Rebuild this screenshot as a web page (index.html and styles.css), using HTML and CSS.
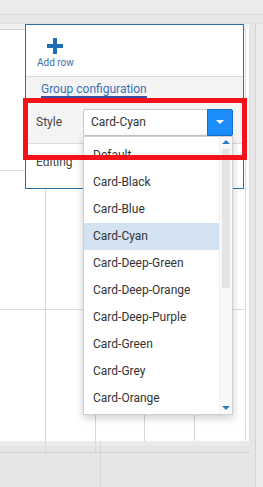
FILE: index.html
```html
<!DOCTYPE html>
<html lang="en">
<head>
    <meta charset="UTF-8">
    <meta name="viewport" content="width=device-width, initial-scale=1.0">
    <title>Group configuration</title>
    <link rel="stylesheet" href="styles.css">
</head>
<body>
    <div class="screen">
        <div class="topbar"></div>
        <div class="subbar"></div>

        <div class="workspace">
            <div class="board">
                <div class="board-top">
                    <div class="sheet">
                        <div class="sheet-row row-a"></div>
                        <div class="sheet-row row-b">
                            <div class="cell c1"></div>
                        </div>
                        <div class="sheet-row row-c">
                            <div class="cell c1"></div>
                            <div class="cell c2"></div>
                            <div class="cell c3"></div>
                            <div class="cell c4"></div>
                        </div>
                    </div>
                    <div class="sheet-edge"></div>
                </div>
                <div class="footer-strip">
                    <div class="cell c1"></div>
                    <div class="cell c2"></div>
                    <div class="cell c5"></div>
                </div>
                <div class="footer-strip second">
                    <div class="cell c1"></div>
                    <div class="cell c2"></div>
                    <div class="cell c5"></div>
                </div>
                <div class="footer-body">
                    <div class="cell c6"></div>
                </div>
            </div>
            <div class="rail"></div>
            <div class="rest"></div>
        </div>

        <!-- settings panel over the sheet -->
        <div class="panel">
            <div class="panel-toolbar">
                <div class="tool-button">
                    <svg width="16" height="16" viewBox="0 0 16 16">
                        <rect x="6" y="0" width="4" height="16" fill="#1f6db3"/>
                        <rect x="0" y="6" width="16" height="4" fill="#1f6db3"/>
                    </svg>
                    <span>Add row</span>
                </div>
            </div>
            <div class="panel-tabs">
                <span class="tab active">Group configuration</span>
            </div>
            <div class="form-row shaded">
                <span class="form-label">Style</span>
                <div class="select">
                    <span class="select-value">Card-Cyan</span>
                    <span class="select-button"><span class="caret"></span></span>
                </div>
            </div>
            <div class="form-row">
                <span class="form-label editing">Editing</span>
            </div>
        </div>

        <div class="dropdown">
            <div class="options">
                <div class="option">Default</div>
                <div class="option">Card-Black</div>
                <div class="option">Card-Blue</div>
                <div class="option selected">Card-Cyan</div>
                <div class="option">Card-Deep-Green</div>
                <div class="option">Card-Deep-Orange</div>
                <div class="option">Card-Deep-Purple</div>
                <div class="option">Card-Green</div>
                <div class="option">Card-Grey</div>
                <div class="option">Card-Orange</div>
            </div>
            <div class="scrollbar">
                <div class="arrow up"></div>
                <div class="track"><div class="thumb"></div></div>
                <div class="arrow down"></div>
            </div>
        </div>

        <div class="highlight"></div>
    </div>
</body>
</html>
```

FILE: styles.css
```css
* {
    box-sizing: border-box;
}

body {
    margin: 0;
    background-color: #ebebeb;
    font-family: Roboto, "Liberation Sans", Arial, sans-serif;
    color: #333;
}

.screen {
    position: relative;
    width: 263px;
    height: 487px;
    overflow: hidden;
}

.topbar {
    height: 15px;
    background-color: #ebebeb;
    border-bottom: 1px solid #dadada;
}

.subbar {
    height: 9px;
    background-color: #e7e7e7;
    border-bottom: 1px solid #e0e0e0;
}

.workspace {
    display: flex;
    height: 463px;
    background-color: #f1f1f1;
}

.board {
    width: 250px;
    display: flex;
    flex-direction: column;
    padding-top: 5px;
}

.board-top {
    display: flex;
}

.sheet {
    width: 246px;
    background-color: #fff;
    border-top: 1px solid #d4d4d4;
    border-right: 1px solid #dcdcdc;
}

.sheet-edge {
    width: 4px;
    background-color: #fff;
    border-right: 1px solid #dcdcdc;
}

.sheet-row {
    display: flex;
    border-bottom: 1px solid #dcdcdc;
}

.row-a {
    height: 141px;
}

.row-b {
    height: 139px;
}

.row-c {
    height: 131px;
    border-bottom: none;
}

.cell {
    border-right: 1px solid #d8d8d8;
}

.c1 { width: 46px; }
.c2 { width: 50px; }
.c3 { width: 49px; }
.c4 { width: 50px; }
.c5 { width: 5px; }
.c6 { width: 101px; height: 100%; }

.footer-strip {
    display: flex;
    height: 6px;
    background-color: #ebebeb;
    border-bottom: 1px solid #e0e0e0;
}

.footer-strip.second {
    background-color: #e6e6e6;
    border-bottom-color: #d2d2d2;
}

.footer-body {
    flex: 1;
    display: flex;
    background-color: #e6e6e6;
}

.rail {
    width: 6px;
    background-color: #e6e6e6;
    border-right: 1px solid #d3d3d3;
}

.rest {
    flex: 1;
    background-color: #ececec;
}

/* panel */
.panel {
    position: absolute;
    left: 25px;
    top: 24px;
    width: 219px;
    height: 165px;
    background-color: #fff;
    border: 1px solid #2d6ea6;
}

.panel-toolbar {
    height: 52px;
    border-bottom: 1px solid #dcdcdc;
    padding: 13px 0 0 11px;
}

.tool-button {
    display: inline-flex;
    flex-direction: column;
    align-items: center;
    gap: 3px;
}

.tool-button svg {
    display: block;
}

.tool-button span {
    font-size: 10px;
    line-height: 12px;
    color: #3a6eaa;
}

.panel-tabs {
    height: 22px;
    background-color: #f4f4f4;
    padding-left: 15px;
}

.tab {
    display: inline-block;
    font-size: 12px;
    line-height: 14px;
    padding-top: 5px;
    color: #3a72b6;
}

.tab.active {
    border-bottom: 2px solid #3c4fa2;
}

.form-row {
    display: flex;
    align-items: center;
    height: 45px;
    padding-left: 10px;
    border-bottom: 1px solid #dcdcdc;
}

.form-row:last-child {
    border-bottom: none;
    align-items: flex-start;
    padding-top: 11px;
}

.form-row.shaded {
    background-color: #f4f4f4;
    padding-top: 2px;
}

.form-label {
    width: 47px;
    font-size: 12px;
    line-height: 14px;
    color: #444;
}

.select {
    display: flex;
    width: 150px;
    height: 27px;
    background-color: #fff;
    border: 1px solid #c9c9c9;
    border-radius: 2px;
}

.select-value {
    flex: 1;
    font-size: 12px;
    line-height: 25px;
    padding-left: 7px;
    color: #333;
}

.select-button {
    width: 26px;
    margin: -1px -1px -1px 0;
    background-color: #1c8dfb;
    border: 1px solid #1670c8;
    border-radius: 0 2px 2px 0;
    display: flex;
    align-items: center;
    justify-content: center;
}

.caret {
    width: 0;
    height: 0;
    border-left: 4px solid transparent;
    border-right: 4px solid transparent;
    border-top: 4px solid #fff;
}

/* open list */
.dropdown {
    position: absolute;
    left: 83px;
    top: 136px;
    width: 150px;
    height: 279px;
    display: flex;
    background-color: #fff;
    border: 1px solid #d0d0d0;
    box-shadow: 0 3px 8px rgba(0, 0, 0, 0.2);
}

.options {
    flex: 1;
    padding-top: 5px;
}

.option {
    height: 27px;
    line-height: 27px;
    padding-left: 9px;
    font-size: 12px;
    color: #333;
}

.option.selected {
    background-color: #d3e3f2;
}

.scrollbar {
    width: 13px;
    display: flex;
    flex-direction: column;
    background-color: #f8f8f8;
    border-left: 1px solid #efefef;
}

.arrow {
    height: 9px;
    display: flex;
    align-items: center;
    justify-content: center;
}

.arrow.up::before,
.arrow.down::before {
    content: "";
    width: 0;
    height: 0;
    border-left: 4px solid transparent;
    border-right: 4px solid transparent;
}

.arrow.up::before {
    border-bottom: 4px solid #2f7bbf;
}

.arrow.down {
    height: 12px;
}

.arrow.down::before {
    border-top: 4px solid #2f7bbf;
}

.track {
    flex: 1;
    padding: 3px 2px 0 2px;
}

.thumb {
    height: 139px;
    background-color: #e4e4e4;
}

/* annotation box */
.highlight {
    position: absolute;
    left: 23px;
    top: 98px;
    width: 224px;
    height: 62px;
    border: 5px solid #f3121a;
}
```
